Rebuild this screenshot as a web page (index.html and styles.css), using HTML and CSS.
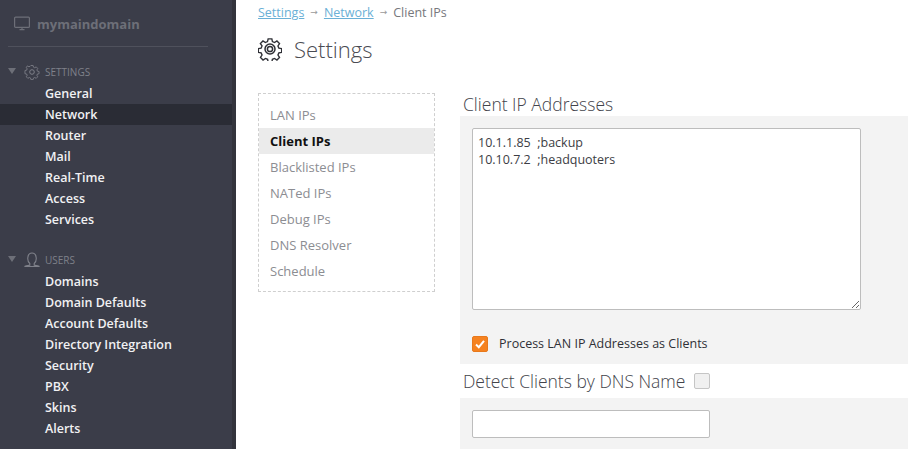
FILE: index.html
```html
<!DOCTYPE html>
<html lang="en">
<head>
<meta charset="utf-8">
<title>Settings</title>
<link rel="stylesheet" href="styles.css">
</head>
<body>
<div class="app">
  <aside class="sidebar">
    <div class="domain">
      <svg class="monitor" width="16" height="16" viewBox="0 0 16 16" fill="none" stroke="#6d6f78" stroke-width="1.2"><rect x="0.6" y="1.1" width="14.8" height="10.3" rx="1"/><path d="M5.5 13.6h5M8 11.5v2" /></svg>
      <span>mymaindomain</span>
    </div>
    <div class="rule"></div>
    <div class="group">
      <div class="group-head">
        <span class="caret"></span>
        <svg class="group-icon" width="16" height="16" viewBox="0 0 16 16" fill="none" stroke="#7f818a" stroke-width="1"><path d="M6.7.8h2.6l.4 2 1.5.7 1.8-1 1.8 1.8-1 1.8.6 1.5 2 .4v2.6l-2 .4-.6 1.5 1 1.8-1.800 1.800-1.800-1-1.500.6-.4 2H6.700l-.4-2-1.500-.6-1.800 1-1.800-1.800 1-1.800-.6-1.500-2-.4V6.800l2-.4.600-1.500-1-1.800L2.500 1.300l1.800 1 1.500-.6z" transform="translate(1.300 .8) scale(.84)"/><circle cx="8" cy="8" r="2.300"/></svg>
        <span class="group-title">SETTINGS</span>
      </div>
      <a class="item">General</a>
      <a class="item active">Network</a>
      <a class="item">Router</a>
      <a class="item">Mail</a>
      <a class="item">Real-Time</a>
      <a class="item">Access</a>
      <a class="item">Services</a>
    </div>
    <div class="group group-users">
      <div class="group-head">
        <span class="caret"></span>
        <svg class="group-icon" width="16" height="16" viewBox="0 0 16 16" fill="none" stroke="#7f818a" stroke-width="1.100"><path d="M5.800 11.500C3.800 9.800 3.600 7.800 3.800 5.700 4 3 5.800 1 8 1s4 2 4.200 4.700c.2 2.100 0 4.100-2 5.800l0 1.800c2 .3 3.900.5 5.300 1.200H.5c1.400-.7 3.300-.9 5.300-1.200z"/></svg>
        <span class="group-title">USERS</span>
      </div>
      <a class="item">Domains</a>
      <a class="item">Domain Defaults</a>
      <a class="item">Account Defaults</a>
      <a class="item">Directory Integration</a>
      <a class="item">Security</a>
      <a class="item">PBX</a>
      <a class="item">Skins</a>
      <a class="item">Alerts</a>
    </div>
  </aside>
  <main class="main">
    <nav class="crumbs">
      <a class="crumb-link">Settings</a><span class="arrow">→</span><a class="crumb-link">Network</a><span class="arrow">→</span><span class="crumb-current">Client IPs</span>
    </nav>
    <header class="title">
      <svg width="24" height="24" viewBox="0 0 24 24" fill="none" stroke="#2f3036" stroke-width="1.500"><path d="M10 1h4l.6 3 2.300 1 2.600-1.700 2.800 2.800-1.700 2.600 1 2.300 3 .6v4l-3 .6-1 2.300 1.700 2.600-2.800 2.800-2.600-1.700-2.300 1-.6 3h-4l-.6-3-2.300-1-2.600 1.700-2.800-2.800 1.700-2.600-1-2.300-3-.6v-4l3-.6 1-2.300L1.600 6.100l2.800-2.800L7 5l2.300-1z" transform="translate(.900 .900) scale(.925)"/><circle cx="12" cy="12" r="5"/><circle cx="12" cy="12" r="2.600"/></svg>
      <h1>Settings</h1>
    </header>
    <div class="content">
      <ul class="tabs">
        <li>LAN IPs</li>
        <li class="selected">Client IPs</li>
        <li>Blacklisted IPs</li>
        <li>NATed IPs</li>
        <li>Debug IPs</li>
        <li>DNS Resolver</li>
        <li>Schedule</li>
      </ul>
      <section class="form">
        <h2>Client IP Addresses</h2>
        <div class="panel panel-first">
          <textarea class="ips" spellcheck="false">10.1.1.85  ;backup
10.10.7.2  ;headquoters</textarea>
          <label class="check-row">
            <span class="check checked"><svg width="12" height="12" viewBox="0 0 12 12" fill="none" stroke="#fff" stroke-width="2"><path d="M2 6.500l2.800 2.700L10 2.800"/></svg></span>
            <span>Process LAN IP Addresses as Clients</span>
          </label>
        </div>
        <h2 class="h-inline">Detect Clients by DNS Name <span class="check"></span></h2>
        <div class="panel panel-second">
          <input class="dns" type="text">
        </div>
      </section>
    </div>
  </main>
</div>
</body>
</html>
```

FILE: styles.css
```css
* { box-sizing: border-box; }
html, body { margin: 0; height: 100%; overflow: hidden; }
body { font-family: "Open Sans", sans-serif; background: #fff; color: #3c3d44; }
.app { display: flex; height: 449px; width: 908px; overflow: hidden; }

.sidebar {
  width: 236px; flex: none; height: 449px; background: #3b3d49;
  border-right: 4px solid #33343c; padding-top: 14px; color: #fff;
}
.domain { display: flex; align-items: center; gap: 7px; height: 20px; padding-left: 14px; font-size: 13px; font-weight: 700; color: #6d6f78; }
.monitor { flex: none; }
.rule { height: 1px; background: #4f515c; margin: 12px 24px 0 8px; }
.group { margin-top: 15px; }
.group-users { margin-top: 20px; }
.group-head { display: flex; align-items: center; height: 21px; padding-left: 8px; position: relative; }
.caret { width: 0; height: 0; border-left: 4px solid transparent; border-right: 4px solid transparent; border-top: 6px solid #6d6f78; margin-top: -4px; }
.group-icon { margin-left: 8px; margin-top: -2px; }
.group-title { margin-left: 5px; font-size: 10px; color: #7f818a; line-height: 21px; }
.item { display: block; height: 21px; line-height: 21px; padding-left: 45px; font-size: 12.500px; font-weight: 600; color: #f1f1f3; }
.item.active { background: #2a2c35; }

.main { flex: 1; min-width: 0; padding-left: 22px; }
.crumbs { display: flex; align-items: center; height: 24px; font-size: 12.500px; }
.crumb-link { color: #6ab0d6; text-decoration: underline; }
.arrow { color: #9a9a9a; margin: 0 6px; font-family: "DejaVu Sans", sans-serif; font-size: 9px; }
.crumb-current { color: #77787d; }
.title { display: flex; align-items: center; gap: 12px; height: 26px; margin-top: 12px; }
h1 { margin: 0; font-size: 22px; font-weight: 300; color: #4a4b52; line-height: 26px; }

.content { display: flex; margin-top: 31px; gap: 25px; align-items: flex-start; }
.tabs {
  list-style: none; margin: 0; padding: 8px 0 8px; width: 177px; flex: none; height: 199px;
  border: 1px dashed #cfcfcf;
}
.tabs li { height: 26px; line-height: 26px; padding-left: 11px; font-size: 13px; color: #8c8d92; }
.tabs li.selected { background: #ebebeb; color: #111; font-weight: 700; }

.form { flex: 1; min-width: 0; margin-right: -1px; }
h2 { margin: 0; padding-left: 3px; font-size: 17.500px; font-weight: 300; color: #43444b; height: 23px; line-height: 23px; display: flex; align-items: center; gap: 4px; white-space: pre; }
.panel { background: #f3f3f3; padding: 12px; }
.panel-first { height: 248px; }
.panel-second { height: 51px; }
.h-inline { height: 34px; line-height: 34px; }
.ips {
  display: block; width: 389px; height: 182px; border: 1px solid #bdbdbd; border-radius: 2px; padding: 5px; margin: 0;
  font-family: "Open Sans", sans-serif; font-size: 12.500px; line-height: 17px; color: #3c3d44; background: #fff; outline: none;
}
.check-row { display: flex; align-items: center; gap: 11px; margin-top: 25px; font-size: 12.500px; color: #2f3036; }
.check { display: inline-flex; align-items: center; justify-content: center; width: 16px; height: 16px; flex: none; border: 1px solid #c5c5c5; border-radius: 2px; background: #f0f0f0; }
.check.checked { background: #f58220; border-color: #e8791c; }
.dns { display: block; width: 238px; height: 28px; border: 1px solid #bdbdbd; border-radius: 2px; background: #fff; outline: none; margin: 0; padding: 0 5px; }
```
